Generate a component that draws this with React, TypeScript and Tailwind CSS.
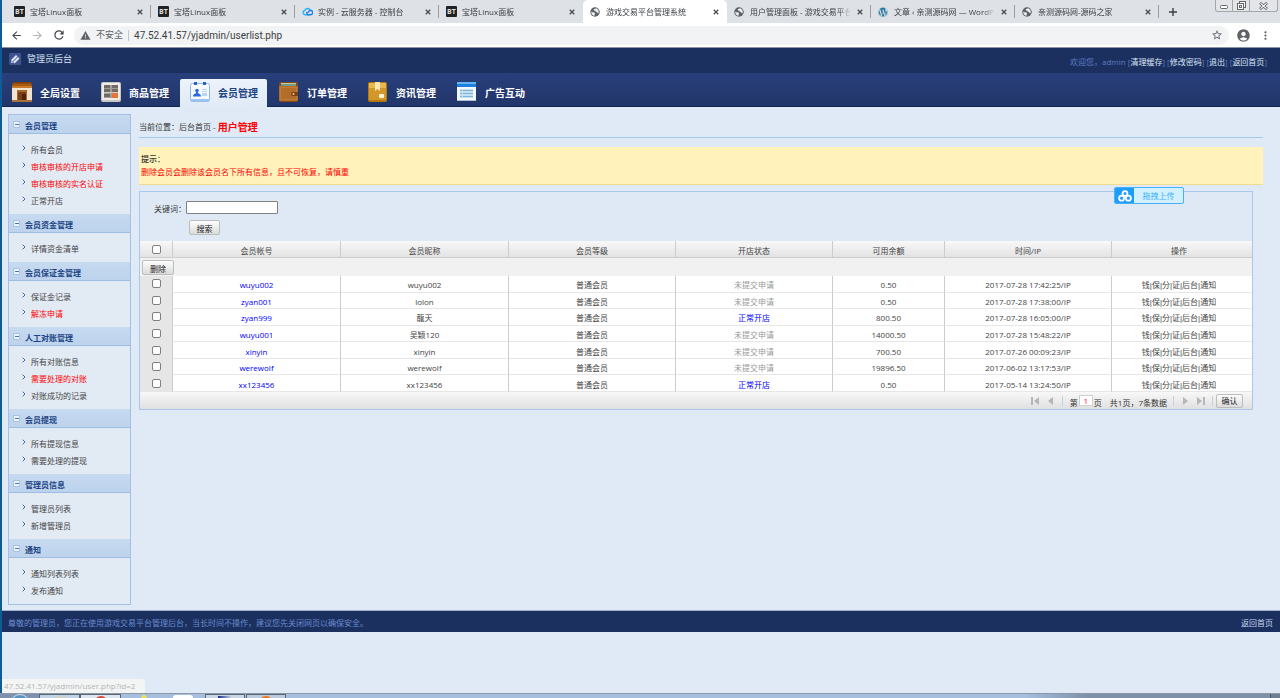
import React from "react";
import { FaWordpress } from "react-icons/fa";
import { MdAccountCircle, MdArrowBack, MdArrowForward, MdMoreVert, MdRefresh, MdStarBorder, MdWarning } from "react-icons/md";

type TabType = {
    icon: "bt" | "cloud" | "globe" | "wp",
    title: string,
    active?: boolean
}

type SideItem = {
    label: string,
    red?: boolean
}

type SideSection = {
    title: string,
    items: SideItem[]
}

type UserRow = {
    account: string,
    nick: string,
    open: boolean,
    balance: string,
    time: string
}

const tabs: TabType[] = [
    { icon: "bt", title: "宝塔Linux面板" },
    { icon: "bt", title: "宝塔Linux面板" },
    { icon: "cloud", title: "实例 - 云服务器 - 控制台" },
    { icon: "bt", title: "宝塔Linux面板" },
    { icon: "globe", title: "游戏交易平台管理系统", active: true },
    { icon: "globe", title: "用户管理面板 - 游戏交易平台" },
    { icon: "wp", title: "文章 ‹ 亲测源码网 — WordPress" },
    { icon: "globe", title: "亲测源码网-源码之家" },
]

const sections: SideSection[] = [
    { title: "会员管理", items: [{ label: "所有会员" }, { label: "审核审核的开店申请", red: true }, { label: "审核审核的实名认证", red: true }, { label: "正常开店" }] },
    { title: "会员资金管理", items: [{ label: "详情资金清单" }] },
    { title: "会员保证金管理", items: [{ label: "保证金记录" }, { label: "解冻申请", red: true }] },
    { title: "人工对账管理", items: [{ label: "所有对账信息" }, { label: "需要处理的对账", red: true }, { label: "对账成功的记录" }] },
    { title: "会员提现", items: [{ label: "所有提现信息" }, { label: "需要处理的提现" }] },
    { title: "管理员信息", items: [{ label: "管理员列表" }, { label: "新增管理员" }] },
    { title: "通知", items: [{ label: "通知列表列表" }, { label: "发布通知" }] },
]

const users: UserRow[] = [
    { account: "wuyu002", nick: "wuyu002", open: false, balance: "0.50", time: "2017-07-28 17:42:25/IP" },
    { account: "zyan001", nick: "lolon", open: false, balance: "0.50", time: "2017-07-28 17:38:00/IP" },
    { account: "zyan999", nick: "龍天", open: true, balance: "800.50", time: "2017-07-28 16:05:00/IP" },
    { account: "wuyu001", nick: "吴颖120", open: false, balance: "14000.50", time: "2017-07-28 15:48:22/IP" },
    { account: "xinyin", nick: "xinyin", open: false, balance: "700.50", time: "2017-07-26 00:09:23/IP" },
    { account: "werewolf", nick: "werewolf", open: false, balance: "19896.50", time: "2017-06-02 13:17:53/IP" },
    { account: "xx123456", nick: "xx123456", open: true, balance: "0.50", time: "2017-05-14 13:24:50/IP" },
]

const actions = ["钱", "保", "分", "证", "后台", "通知"]

const GlobeIcon = () => (
    <svg viewBox="0 0 16 16" className="size-[10px]">
        <circle cx="8" cy="8" r="7.6" fill="#5f6368" />
        <path d="M2 7.2c2.600 2.600 4.400.4 5.600 2.200.8 1.400-.6 2.200-.2 4.600C4 14 1.800 11 2 7.200z" fill="#eceef1" />
        <path d="M9.400 1.900c-1.200 1.400-3.600.8-3.400 2.700.2 1.600 2.400.6 3 2 .5 1.400 2.500 1 3.100 2.400.2.700.6 1.200 1.400 1.200C15 6.500 13 2.500 9.400 1.900z" fill="#eceef1" />
    </svg>
)

const TabIcon: React.FC<{icon: TabType["icon"]}> = ({icon}) => {
    if (icon === "bt") {
        return <span className="grid size-[11px] place-items-center rounded-[1px] bg-[#222] text-[7px] font-bold leading-none text-[#ddd]">BT</span>
    }
    if (icon === "cloud") {
        return (
            <svg viewBox="0 0 22 18" className="h-[9px] w-[11px]" fill="none" strokeWidth="2.6">
                <path d="M13 15.500H6a4.300 4.300 0 0 1-.6-8.500A6 6 0 0 1 16.500 6.500" stroke="#20b2f5" />
                <path d="M8.500 10l3 5.500h5a4.500 4.500 0 0 0 .5-9c-3 .3-4 2.500-5.500 5" stroke="#1a7ef0" />
            </svg>
        )
    }
    if (icon === "wp") return <FaWordpress className="size-[10px] text-[#21759b]" />
    return <GlobeIcon />
}

const BrowserTab: React.FC<{tab: TabType, separator: boolean}> = ({tab, separator}) => (
    <div className={`relative flex h-full w-[144px] min-w-0 items-center pl-[7px] pr-[8px] ${tab.active ? "rounded-t-[5px] bg-white" : ""}`}>
        <span className="flex w-[12px] shrink-0">
            <TabIcon icon={tab.icon} />
        </span>
        <span className="ml-[4px] min-w-0 flex-1 overflow-hidden whitespace-nowrap text-[8px] leading-[12px] text-[#3c4043] [mask-image:linear-gradient(to_right,#000_88%,transparent)]">{tab.title}</span>
        <button aria-label="关闭标签页" className="ml-[6px] shrink-0">
            <svg viewBox="0 0 8 8" className="size-[6px]" stroke="#45494d" strokeWidth="1.600"><path d="M1 1l6 6M7 1l-6 6" /></svg>
        </button>
        {separator && <span className="absolute right-0 top-[5px] h-[13px] w-px bg-[#9a9da2]" />}
    </div>
)

const WindowControls = () => (
    <div className="flex h-[12px] self-start overflow-hidden rounded-b-[3px] border border-t-0 border-[#a3a7ac] bg-[#e3e5e9]">
        <button aria-label="最小化" className="grid w-[17px] place-items-center border-r border-[#a3a7ac]">
            <svg viewBox="0 0 8 4" className="mt-[2px] h-[4px] w-[8px]" fill="#fff" stroke="#666"><rect x=".5" y=".5" width="7" height="3" rx="1" /></svg>
        </button>
        <button aria-label="还原" className="grid w-[17px] place-items-center border-r border-[#a3a7ac]">
            <svg viewBox="0 0 9 9" className="size-[9px]" fill="#fff" stroke="#666"><rect x="2.5" y=".5" width="6" height="6" /><rect x=".5" y="2.500" width="6" height="6" /><rect x="2.500" y="4.500" width="2" height="2" /></svg>
        </button>
        <button aria-label="关闭" className="grid w-[27px] place-items-center">
            <svg viewBox="0 0 9 8" className="h-[8px] w-[9px]" fill="none"><path d="M1 1l7 6M8 1L1 7" stroke="#666" strokeWidth="2.800" /><path d="M1.500 1.400l6 5.200M7.500 1.400l-6 5.200" stroke="#fff" strokeWidth="1.200" /></svg>
        </button>
    </div>
)

const Toolbar = () => (
    <div className="flex h-[25px] items-center border-b border-[#8b93a5] bg-white pl-[8px] pr-[8px] text-[#5f6368]">
        <button aria-label="后退"><MdArrowBack className="size-[13px] text-[#45494d]" /></button>
        <button aria-label="前进" className="ml-[8px]"><MdArrowForward className="size-[13px] text-[#b4b6b9]" /></button>
        <button aria-label="重新加载" className="ml-[8px]"><MdRefresh className="size-[14px] text-[#45494d]" /></button>
        <div className="ml-[8px] flex h-[19px] flex-1 items-center rounded-full bg-[#f1f3f4] pl-[6px] pr-[6px]">
            <MdWarning className="size-[11px]" />
            <span className="ml-[5px] text-[9px] leading-[12px]">不安全</span>
            <span className="mx-[5px] h-[11px] w-px bg-[#c4c6c9]" />
            <input aria-label="地址" readOnly value="47.52.41.57/yjadmin/userlist.php" className="h-[14px] min-w-0 flex-1 bg-transparent font-[Roboto] text-[10px] text-[#3c4043] outline-none" />
            <button aria-label="收藏"><MdStarBorder className="size-[12px]" /></button>
        </div>
        <MdAccountCircle className="ml-[7px] size-[15px] text-[#5f6368]" />
        <MdMoreVert className="ml-[8px] size-[13px]" />
    </div>
)

const ShopIcon = () => (
    <svg viewBox="0 0 20 20" className="size-[20px]">
        <path d="M1 0h18l1 5H0z" fill="#a75a12" />
        <path d="M1 0h18v1.500H1z" fill="#7c3d08" />
        <path d="M0 4h20v2H0z" fill="#c97a28" />
        <path d="M0 6h20v12H0z" fill="#f0e4d0" />
        <path d="M0 18h20v2H0z" fill="#a8703c" />
        <path d="M5 8h10v10H5z" fill="#a8672c" />
        <path d="M6 10h8v8H6z" fill="#7a3f14" />
        <path d="M10 12h4v6h-4z" fill="#4f2408" />
    </svg>
)

const ShelfIcon = () => (
    <svg viewBox="0 0 20 20" className="size-[20px]">
        <rect width="20" height="20" rx="2" fill="#c9c6c2" />
        <rect x="1" y="1" width="18" height="17" rx="1" fill="#efece8" />
        <path d="M3 3h14v13H3z" fill="#a39d98" />
        <path d="M3 3h6v3H3zM11 3h6v3h-6zM3 7h6v3H3zM11 7h6v3h-6zM3 12h6v3H3z" fill="#716a66" />
        <path d="M11 11h6v5h-6z" fill="#e8743a" />
        <path d="M3 10h14v1H3z" fill="#d2ccc6" />
    </svg>
)

const MemberIcon = () => (
    <svg viewBox="0 0 20 20" className="size-[20px]">
        <rect x=".5" y="1.500" width="19" height="18" rx="2" fill="#f6faff" stroke="#8fb8ea" />
        <path d="M1 17h18v1.500q0 1-1 1H2q-1 0-1-1z" fill="#9cc4f2" />
        <path d="M4 0h3v3H4zM13 0h3v3h-3z" fill="#2f62b5" />
        <circle cx="7" cy="8.500" r="1.800" fill="#2a6be0" />
        <path d="M3 14.500q0-2.500 3-3.200V10h2v1.300q3 .7 3 3.200z" fill="#2a6be0" />
        <path d="M12 7h5v1h-5zM12 9h5v1h-5zM12 11h5v3h-5z" fill="#b7d3f5" />
    </svg>
)

const WalletIcon = () => (
    <svg viewBox="0 0 20 20" className="size-[20px]">
        <rect x="0" y="0" width="19" height="20" rx="2" fill="#8a4c17" />
        <path d="M2 1h15v1H2z" fill="#b5c8b0" />
        <path d="M2 2h15v2H2z" fill="#7a9a80" />
        <rect x="0" y="4" width="19" height="15" rx="1" fill="#b46c2a" />
        <path d="M1.500 5.500h16v12h-16z" fill="none" stroke="#d8a05e" strokeDasharray="1 1" strokeWidth=".6" />
        <path d="M13 10h6v4h-6q-2-2 0-4z" fill="#7d4212" />
        <circle cx="14.500" cy="12" r="1" fill="#efc88c" />
    </svg>
)

const BoxIcon = () => (
    <svg viewBox="0 0 20 20" className="size-[20px]">
        <rect x="0" y="0" width="19" height="20" rx="2" fill="#b5770f" />
        <rect x="1" y="1" width="17" height="17" rx="1" fill="#d3982a" />
        <path d="M1 1h17v5H1z" fill="#e8b94e" />
        <path d="M7 0h5v9l-2.500-2L7 9z" fill="#f7e7b0" />
        <rect x="11" y="12" width="5" height="4" rx="1" fill="#fdf3d8" />
    </svg>
)

const WindowIcon = () => (
    <svg viewBox="0 0 20 20" className="size-[20px]">
        <rect x="0" y="0" width="19" height="19" rx="1" fill="#f3f8fc" />
        <path d="M0 1q0-1 1-1h17q1 0 1 1v4H0z" fill="#1c7fdc" />
        <path d="M0 1q0-1 1-1h17q1 0 1 1v1H0z" fill="#63b4f5" />
        <rect x="3" y="7" width="13" height="9" fill="#c4dff0" />
        <path d="M3 8.500h2M6 8.500h10M3 11.500h2M6 11.500h10M3 14.500h2M6 14.500h10" stroke="#7fb3d8" strokeWidth="1" />
        <path d="M0 18h19v1H0z" fill="#a9c0d6" />
    </svg>
)

const navItems = [
    { label: "全局设置", icon: <ShopIcon /> },
    { label: "商品管理", icon: <ShelfIcon /> },
    { label: "会员管理", icon: <MemberIcon />, active: true },
    { label: "订单管理", icon: <WalletIcon /> },
    { label: "资讯管理", icon: <BoxIcon /> },
    { label: "广告互动", icon: <WindowIcon /> },
]

const Header = () => (
    <header>
        <div className="flex h-[25px] items-center justify-between bg-[#1b305f] pl-[7px] pr-[13px]">
            <div className="flex items-center pb-[3px]">
                <span className="grid size-[12px] place-items-center rounded-[1px] bg-[#3d5490]">
                    <svg viewBox="0 0 12 12" className="size-[12px]">
                        <path d="M2 7l5-5 1.500 1.500-5 5zM4 9l5-5 1.500 1.500-5 5z" fill="#dde6f5" />
                        <path d="M2 7l2.500 3L2 10z" fill="#a9bce0" />
                    </svg>
                </span>
                <h1 className="ml-[6px] text-[9px] leading-[12px] text-[#d5e1f5]">管理员后台</h1>
            </div>
            <div className="pt-[2px] text-[8px] leading-[12px] text-[#5f7cc0]">
                欢迎您，admin{" "}
                {["清理缓存", "修改密码", "退出", "返回首页"].map((item) => (
                    <React.Fragment key={item}>[<a href="#" className="text-[#dbe7f8]">{item}</a>] </React.Fragment>
                ))}
            </div>
        </div>
        <nav className="flex h-[34px] items-end gap-[2px] border-b border-[#14264f] bg-linear-to-b from-[#283f7b] to-[#21366a]">
            {navItems.map((item) => (
                <a
                    key={item.label}
                    href="#"
                    className={`-mb-px flex h-[28px] w-[87px] items-start rounded-t-[2px] pl-[10px] pt-[3px] text-[10px] font-bold ${item.active ? "bg-linear-to-b from-[#edf3fb] to-[#e0eaf6] text-[#1c4484]" : "text-white"}`}
                >
                    {item.icon}
                    <span className="ml-[8px] mt-[4px] leading-[14px]">{item.label}</span>
                </a>
            ))}
        </nav>
    </header>
)

const Sidebar = () => (
    <aside className="w-[123px] shrink-0 self-start border border-[#a5c0e4] bg-[#e2eaf4] text-[8px]">
        {sections.map((section) => (
            <section key={section.title}>
                <h2 className="flex h-[19px] items-center border-b border-[#9fbce2] bg-linear-to-b from-[#c6daf0] to-[#bdd2ec] pl-[4px] font-bold leading-[12px] text-[#1c4484]">
                    <button aria-label="折叠" className="grid size-[7px] place-items-center border border-[#a8c3e6] bg-[#eef4fc]">
                        <span className="h-px w-[4px] bg-[#4c7ab8]" />
                    </button>
                    <span className="ml-[5px] mt-[4px]">{section.title}</span>
                </h2>
                <ul className="pb-[5px] pt-[7px]">
                    {section.items.map((item) => (
                        <li key={item.label} className="flex h-[17px] pl-[13px] leading-[17px]">
                            <svg viewBox="0 0 4 6" className="mt-[4px] h-[6px] w-[4px]" fill="none" stroke="#47689c"><path d="M.7.7L3 3 .7 5.300" /></svg>
                            <a href="#" className={`ml-[5px] ${item.red ? "text-[#ff0000]" : "text-[#444]"}`}>{item.label}</a>
                        </li>
                    ))}
                </ul>
            </section>
        ))}
    </aside>
)

const CheckBox: React.FC<{label: string}> = ({label}) => (
    <input type="checkbox" aria-label={label} className="mx-auto block size-[9px] appearance-none rounded-[2px] border border-[#808080] bg-white" />
)

const GrayButton: React.FC<{children: React.ReactNode, className: string}> = ({children, className}) => (
    <button className={`rounded-[2px] border border-[#bdbdbd] bg-linear-to-b from-[#fdfdfd] to-[#dcdcdc] text-[8px] leading-[12px] text-[#222] ${className}`}>{children}</button>
)

const UploadWidget = () => (
    <button className="absolute right-[68px] top-[-5px] flex h-[17px] w-[70px] items-center overflow-hidden rounded-[2px] border border-[#45b1fa] bg-[#d3f0ff] text-[8px] text-[#3fb0fb]">
        <span className="grid h-full w-[19px] place-items-center bg-[#1e9dfc]">
            <svg viewBox="0 0 14 12" className="h-[12px] w-[14px]" fill="none" stroke="#fff" strokeWidth="1.800">
                <circle cx="7" cy="3.500" r="2.400" />
                <circle cx="3.600" cy="8.200" r="2.500" />
                <circle cx="10.400" cy="8.200" r="2.500" />
            </svg>
        </span>
        <span className="flex-1 text-center leading-[15px]">拖拽上传</span>
    </button>
)

const PagerIcon: React.FC<{label: string, d: string}> = ({label, d}) => (
    <button aria-label={label}>
        <svg viewBox="0 0 8 8" className="size-[8px]" fill="#b3b6ba"><path d={d} /></svg>
    </button>
)

const Pager = () => (
    <div className="flex h-[17px] items-center justify-end bg-linear-to-b from-[#f8f8f8] to-[#e0e0e0] pr-[9px] text-[8px] leading-[12px] text-[#333]">
        <PagerIcon label="第一页" d="M0 0h2v8H0zM8 0v8L3 4z" />
        <span className="ml-[8px] flex"><PagerIcon label="上一页" d="M6 0v8L1 4z" /></span>
        <span className="ml-[7px] h-[10px] w-px bg-[#c3d0df]" />
        <label htmlFor="page" className="ml-[7px] mt-[4px]">第</label>
        <input id="page" defaultValue="1" className="ml-[1px] h-[11px] w-[14px] border border-[#d0d0d0] bg-white text-center text-[8px] text-[#ff0033] outline-none" />
        <span className="ml-[1px] mt-[4px]">页</span>
        <span className="ml-[8px] mt-[4px]">共1页，7条数据</span>
        <span className="ml-[6px] h-[10px] w-px bg-[#c3d0df]" />
        <span className="ml-[8px] flex"><PagerIcon label="下一页" d="M1 0v8l5-4z" /></span>
        <span className="ml-[7px] flex"><PagerIcon label="最后一页" d="M0 0v8l5-4zM6 0h2v8H6z" /></span>
        <span className="ml-[7px] mr-[3px] h-[10px] w-px bg-[#c3d0df]" />
        <GrayButton className="h-[14px] w-[27px]">确认</GrayButton>
    </div>
)

const UserTable = () => (
    <table className="h-[151px] w-full table-fixed border-separate border-spacing-0 text-center text-[8px] leading-[12px] text-[#444]">
        <colgroup>
            <col className="w-[33px]" />
            <col className="w-[168px]" />
            <col className="w-[168px]" />
            <col className="w-[167px]" />
            <col className="w-[157px]" />
            <col className="w-[112px]" />
            <col className="w-[167px]" />
            <col className="w-[140px]" />
        </colgroup>
        <thead>
            <tr className="h-[17px] bg-linear-to-b from-[#f8f8f8] to-[#e2e2e2]">
                <th className="border-b border-r border-[#ccc] p-0"><CheckBox label="全选" /></th>
                {["会员帐号", "会员昵称", "会员等级", "开店状态", "可用余额", "时间/IP", "操作"].map((title) => (
                    <th key={title} className="border-b border-r border-[#ccc] p-0 pt-[3px] font-normal last:border-r-0 last:pr-[6px]">{title}</th>
                ))}
            </tr>
        </thead>
        <tbody>
            <tr className="h-[18px] bg-[#f1f1f1]">
                <td colSpan={8} className="p-0 pl-[2px] text-left"><GrayButton className="block h-[15px] w-[32px] pt-[2px]">删除</GrayButton></td>
            </tr>
            {users.map((user) => (
                <tr key={user.account} className="bg-white *:border-b *:border-r *:border-b-[#e6e6e6] *:border-r-[#ccc] *:p-0 *:pt-[3px] *:last:border-r-0 *:last:pr-[6px]">
                    <td className="bg-[#e6e6e6]"><div className="-mt-[3px]"><CheckBox label={user.account} /></div></td>
                    <td><a href="#" className="text-[#0000ff]">{user.account}</a></td>
                    <td>{user.nick}</td>
                    <td>普通会员</td>
                    <td className={user.open ? "text-[#0000ff]" : "text-[#999]"}>{user.open ? "正常开店" : "未提交申请"}</td>
                    <td>{user.balance}</td>
                    <td>{user.time}</td>
                    <td>
                        {actions.map((action, index) => (
                            <React.Fragment key={action}>
                                {index > 0 && <span className='font-["Liberation_Sans"] leading-none'>|</span>}
                                <a href="#">{action}</a>
                            </React.Fragment>
                        ))}
                    </td>
                </tr>
            ))}
        </tbody>
    </table>
)

const Main = () => (
    <main className="min-w-0 flex-1 pl-[8px] pr-[17px] text-[8px] leading-[12px] text-[#333]">
        <div className="flex h-[24px] items-center border-b border-[#a9c8ee] pt-[3px]">
            当前位置：<a href="#">后台首页</a>&nbsp;-&nbsp;<strong className="text-[10px] text-[#ff0000]">用户管理</strong>
        </div>
        <div className="mt-[9px] h-[38px] border-b border-[#efdc93] bg-[#fff3bb] pl-[2px] pt-[5px] leading-[13px]">
            <p className="font-medium">提示：</p>
            <p className="text-[#ff0000]">删除会员会删除该会员名下所有信息，且不可恢复，请慎重</p>
        </div>
        <div className="relative mr-[10px] mt-[6px] border border-[#abc6ea] bg-[#dfe9f6]">
            <UploadWidget />
            <form className="h-[49px] pl-[14px] pt-[9px]" onSubmit={(event) => event.preventDefault()}>
                <div className="flex h-[13px]">
                    <label htmlFor="keyword" className="mt-[2px] w-[32px]">关键词：</label>
                    <input id="keyword" className="h-[13px] w-[92px] rounded-[1px] border border-[#808080] bg-white px-[2px] text-[8px]" />
                </div>
                <GrayButton className="ml-[35px] mt-[6px] block h-[15px] w-[31px] pt-[2px]">搜索</GrayButton>
            </form>
            <UserTable />
            <Pager />
        </div>
    </main>
)

const Taskbar = () => (
    <div className="flex h-[5px] shrink-0 overflow-hidden border-t border-[#8c98a6] bg-linear-to-r from-[#a6bfdf] from-80% to-[#7f91a7] to-85%">
        <div className="flex w-[39px] justify-center bg-[#7d93ad]"><span className="size-[20px] rounded-full border border-[#d5e3f0] bg-[#5c93bd]" /></div>
        <div className="flex w-[41px] justify-center border border-b-0 border-[#5a6675] bg-[#c3d3e7] pt-[2px]"><span className="h-[5px] w-[10px] bg-[#d8cfa8]" /></div>
        <div className="flex w-[41px] justify-center border border-b-0 border-[#5a6675] bg-[#dde5ef] pt-[1px]"><span className="size-[14px] shrink-0 rounded-full bg-[#d9483b]" /></div>
        <svg viewBox="0 0 84 4" className="h-[4px] w-[84px]"><path d="M23 0l3 4h-6z" fill="#f1e34c" /><rect x="52" y="1" width="20" height="8" rx="3" fill="#fff" /></svg>
        <div className="flex w-[40px] justify-center border border-b-0 border-[#5a6675] bg-[#c9d6e6] pt-[1px]"><span className="h-[4px] w-[14px] bg-linear-to-r from-[#1b2a8a] to-[#d5dbe5]" /></div>
        <div className="ml-[1px] flex w-[40px] justify-center border border-b-0 border-[#5a6675] bg-[#bccbdd] pt-[1px]"><span className="size-[14px] shrink-0 rounded-full bg-[#ef7416]" /></div>
        <span className="ml-auto w-[10px] border-l border-[#4f5a67] bg-[#6f7f91]" />
    </div>
)

export default function App() {
    return (
        <div className='flex min-h-screen flex-col bg-[#e0eaf6] font-["Open_Sans","Noto_Sans_CJK_SC",sans-serif]' lang="zh-CN">
            <div className="relative flex flex-1 flex-col border-l-2 border-[#0d5c97]">
                <div className="flex h-[23px] bg-[#dee1e6] pl-[5px]">
                    {tabs.map((tab, index) => (
                        <BrowserTab key={index} tab={tab} separator={!tab.active && !tabs[index + 1]?.active} />
                    ))}
                    <button aria-label="打开新的标签页" className="ml-[10px]">
                        <svg viewBox="0 0 8 8" className="size-[8px]" stroke="#3c4043" strokeWidth="1.400"><path d="M4 0v8M0 4h8" /></svg>
                    </button>
                    <div className="ml-auto mr-[2px] flex"><WindowControls /></div>
                </div>
                <Toolbar />
                <Header />
                <div className="flex pl-[6px] pt-[7px]">
                    <Sidebar />
                    <Main />
                </div>
                <footer className="mt-[5px] flex h-[22px] items-center justify-between border-t border-[#9fb0cd] bg-[#1b305f] pl-[6px] pr-[7px] pt-[2px] text-[8px] leading-[12px]">
                    <span className="text-[#6c8acb]">尊敬的管理员，您正在使用游戏交易平台管理后台，当长时间不操作，建议您先关闭网页以确保安全。</span>
                    <a href="#" className="text-[#c5d5ee]">返回首页</a>
                </footer>
                <div className="absolute bottom-0 left-0 h-[14px] w-[143px] whitespace-nowrap rounded-tr-[2px] bg-[#f3f4f4] pl-[2px] text-[8px] leading-[14px] text-[#b4b6b8]">47.52.41.57/yjadmin/user.php?id=2</div>
            </div>
            <Taskbar />
        </div>
    )
}
